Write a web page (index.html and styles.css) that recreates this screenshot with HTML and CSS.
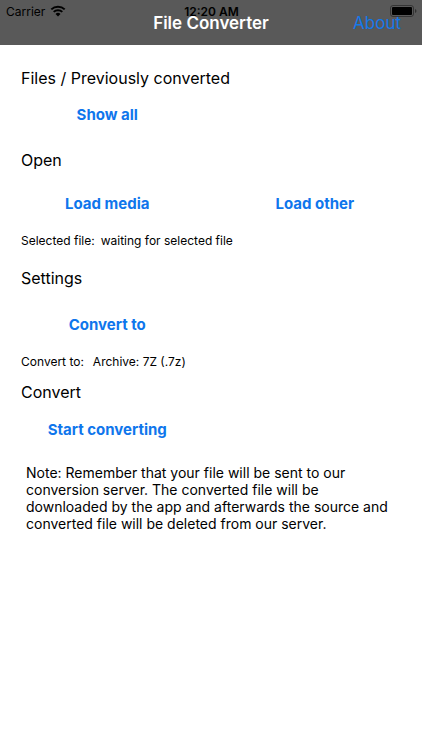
FILE: index.html
```html
<!DOCTYPE html>
<html lang="en">
<head>
    <meta charset="UTF-8">
    <meta name="viewport" content="width=device-width, initial-scale=1.0">
    <title>File Converter</title>
    <link rel="stylesheet" href="styles.css">
</head>
<body>
    <header class="navbar">
        <div class="status-bar">
            <span class="carrier">
                Carrier
                <svg width="16" height="12" viewBox="0 0 16 12" aria-hidden="true">
                    <path d="M1.3 4.4a9.6 9.6 0 0 1 13.4 0M3.7 6.9a6.2 6.2 0 0 1 8.6 0" fill="none" stroke="#000" stroke-width="2"/>
                    <path d="M8 11.4L5.5 8.9a3.6 3.6 0 0 1 5 0z"/>
                </svg>
            </span>
            <span class="time">12:20 AM</span>
            <svg class="battery" width="27" height="12" viewBox="0 0 27 12" aria-hidden="true">
                <rect x="0.5" y="0.5" width="23" height="11" rx="2.5" fill="none" stroke="#000" stroke-opacity="0.4"/>
                <rect x="2" y="2" width="20" height="8" rx="1"/>
                <path d="M25 4v4q1.500-.6 1.500-2T25 4z" fill-opacity="0.45"/>
            </svg>
        </div>
        <h1>File Converter</h1>
        <a class="about" href="#about">About</a>
    </header>
    <main>
        <section class="files">
            <h2>Files / Previously converted</h2>
            <div class="buttons">
                <button type="button">Show all</button>
            </div>
        </section>
        <section class="open">
            <h2>Open</h2>
            <div class="buttons">
                <button type="button">Load media</button>
                <button type="button">Load other</button>
            </div>
            <p class="info"><span>Selected file:</span><span>waiting for selected file</span></p>
        </section>
        <section class="settings">
            <h2>Settings</h2>
            <div class="buttons">
                <button type="button">Convert to</button>
            </div>
            <p class="info wide"><span>Convert to:</span><span>Archive: 7Z (.7z)</span></p>
        </section>
        <section class="convert">
            <h2>Convert</h2>
            <div class="buttons">
                <button type="button">Start converting</button>
            </div>
            <p class="note">Note: Remember that your file will be sent to our conversion server. The converted file will be downloaded by the app and afterwards the source and converted file will be deleted from our server.</p>
        </section>
    </main>
</body>
</html>
```

FILE: styles.css
```css
* {
    box-sizing: border-box;
}
body {
    margin: 0;
    background-color: #fff;
    color: #000;
    font-family: Inter, "Liberation Sans", sans-serif;
}
h1, h2, p {
    margin: 0;
}
.navbar {
    position: relative;
    display: grid;
    grid-template-columns: 1fr auto 1fr;
    align-items: center;
    height: 45px;
    padding: 0 21px;
    background-color: #595959;
}
.navbar h1 {
    grid-column: 2;
    color: #fff;
    font-size: 17px;
    font-weight: 600;
    line-height: 24px;
}
.about {
    justify-self: end;
    color: #1478ea;
    font-size: 17px;
    line-height: 24px;
    text-decoration: none;
}
/* system status, drawn over the title bar */
.status-bar {
    position: absolute;
    top: 0;
    left: 0;
    right: 0;
    display: grid;
    grid-template-columns: 1fr auto 1fr;
    align-items: center;
    height: 22px;
    padding: 0 5px 0 6px;
    font-size: 12px;
}
.carrier {
    display: flex;
    align-items: center;
    gap: 5px;
}
.time {
    font-weight: 600;
}
.battery {
    justify-self: end;
}
main {
    padding: 21px;
}
h2 {
    font-size: 16px;
    font-weight: 400;
    line-height: 24px;
}
.buttons {
    display: grid;
    grid-template-columns: 1fr 1fr;
    gap: 35px;
    padding-top: 16px;
}
button {
    height: 30px;
    padding: 0;
    border: none;
    background: none;
    color: #0f76ec;
    font-family: inherit;
    font-size: 15px;
    font-weight: 700;
    cursor: pointer;
}
.info {
    display: flex;
    gap: 6px;
    padding-top: 15px;
    font-size: 12px;
    line-height: 16px;
}
.wide {
    gap: 9px;
}
.files .buttons {
    padding-top: 9px;
}
.open {
    margin-top: 19px;
}
.settings {
    margin-top: 17px;
}
.settings .buttons {
    padding-top: 19px;
}
.convert {
    margin-top: 10px;
}
.convert .buttons {
    padding-top: 10px;
}
.note {
    padding: 20px 5px 0;
    font-size: 14px;
    line-height: 17px;
}
```
